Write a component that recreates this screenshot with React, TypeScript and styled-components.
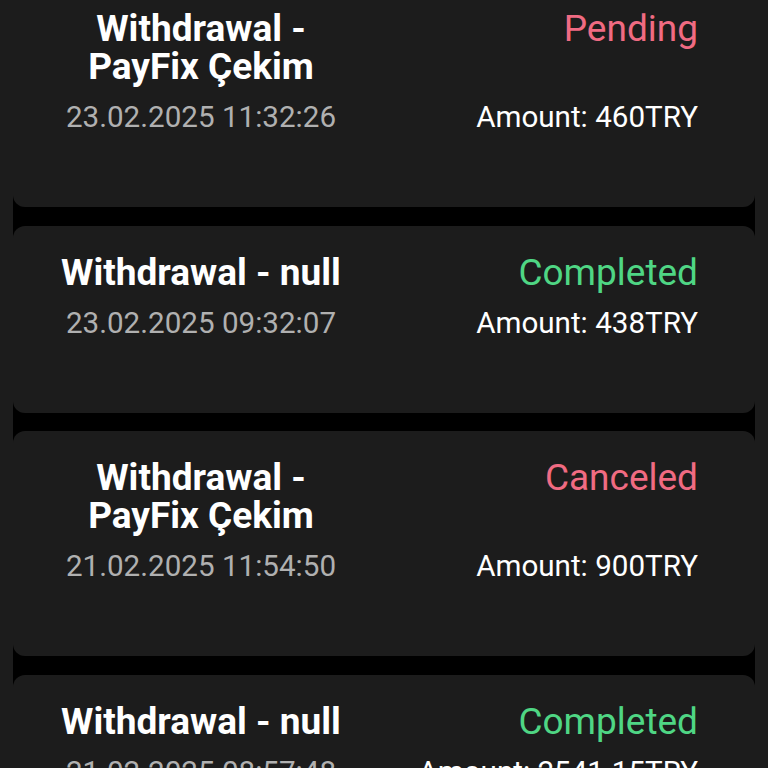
import React from "react";
import styled, { createGlobalStyle } from "styled-components";

const Global = createGlobalStyle`
  html, body {
    margin: 0;
    padding: 0;
    background: #1c1c1c;
    overflow: hidden;
  }
  body {
    font-family: Roboto, "Noto Sans", Arial, sans-serif;
  }
`;

const Page = styled.div`
  width: 768px;
  height: 768px;
  overflow: hidden;
  background: #1c1c1c;
`;

const List = styled.div`
  margin: -18px 13px 0;
  background: #000;
  display: flex;
  flex-direction: column;
  gap: 18.5px;
`;

const Card = styled.div`
  background: #1c1c1c;
  border-radius: 12px;
  padding: 28px 57px 71px 48px;
  display: flex;
  justify-content: space-between;
  align-items: stretch;
`;

const Left = styled.div`
  width: 280px;
  text-align: center;
  display: flex;
  flex-direction: column;
`;

const Title = styled.div`
  color: #ffffff;
  font-weight: 700;
  font-size: 37px;
  line-height: 38px;
`;

const DateText = styled.div`
  margin-top: 12px;
  color: #b0b0b0;
  font-size: 29.6px;
  line-height: 38px;
`;

const Right = styled.div`
  display: flex;
  flex-direction: column;
  justify-content: space-between;
  align-items: flex-end;
  text-align: right;
`;

const Status = styled.div<{ $tone: "pending" | "completed" | "canceled" }>`
  font-size: 37px;
  line-height: 38px;
  color: ${(p) => (p.$tone === "completed" ? "#4fd684" : "#f06b82")};
`;

const Amount = styled.div`
  color: #ffffff;
  font-size: 29.6px;
  line-height: 38px;
  white-space: nowrap;
`;

type Item = {
  title: string;
  date: string;
  status: string;
  tone: "pending" | "completed" | "canceled";
  amount: string;
};

const items: Item[] = [
  { title: "Withdrawal - PayFix Çekim", date: "23.02.2025 11:32:26", status: "Pending", tone: "pending", amount: "460TRY" },
  { title: "Withdrawal - null", date: "23.02.2025 09:32:07", status: "Completed", tone: "completed", amount: "438TRY" },
  { title: "Withdrawal - PayFix Çekim", date: "21.02.2025 11:54:50", status: "Canceled", tone: "canceled", amount: "900TRY" },
  { title: "Withdrawal - null", date: "21.02.2025 08:57:48", status: "Completed", tone: "completed", amount: "2541.15TRY" },
];

export default function App() {
  return (
    <Page>
      <Global />
      <List>
        {items.map((it, i) => (
          <Card key={i}>
            <Left>
              <Title>{it.title}</Title>
              <DateText>{it.date}</DateText>
            </Left>
            <Right>
              <Status $tone={it.tone}>{it.status}</Status>
              <Amount>Amount: {it.amount}</Amount>
            </Right>
          </Card>
        ))}
      </List>
    </Page>
  );
}
